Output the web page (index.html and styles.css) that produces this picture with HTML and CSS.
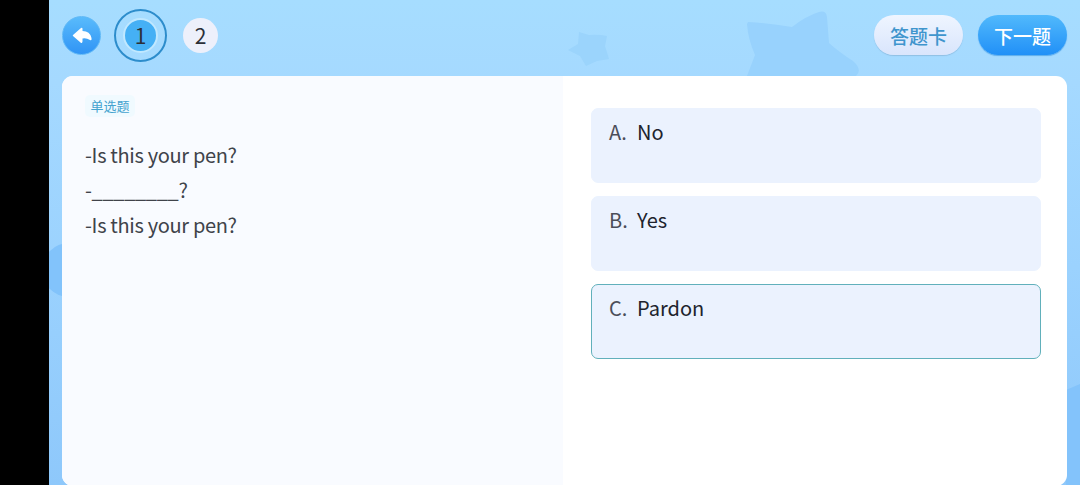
FILE: index.html
```
<!DOCTYPE html>
<html lang="zh-CN">

<head>
    <meta charset="UTF-8" />
    <meta name="viewport" content="width=device-width, initial-scale=1.0" />
    <title>单选题</title>
    <link rel="stylesheet" href="styles.css">
</head>

<body>
    <div class="page">
        <!-- 背景装饰 -->
        <svg class="decor" viewBox="0 0 1031 485" aria-hidden="true">
            <path class="star-small" d="M530 32 L540 35 Q549 34 558 36 L556 46 L560 59 L548 61 L537 66 L531 56 L519 50 L529 44 Z" />
            <path class="star-big" d="M699 22 Q720 23 743 27 Q757 16 770 12 Q777 10 778 17 L780 43 Q790 52 804 61 Q814 70 807 76 L698 76 L706 55 Q699 39 698 24 Z" />
            <circle class="bubble" cx="20" cy="270" r="27" />
            <path class="corner" d="M1017 390 L1031 384 V485 H1017 Z" />
        </svg>

        <div class="header">
            <button class="back">
                <svg width="20" height="18" viewBox="0 0 20 18">
                    <path d="M1 8 L9 1 Q10.5 0 10.5 2 V4 Q18 4 19.5 11 Q20 14 18 13 Q14 10.5 10.5 11.5 V14.5 Q10 17 8.500 15.500 L1 9 Q0.500 8.500 1 8 Z" />
                </svg>
            </button>
            <div class="num active"><span>1</span></div>
            <div class="num"><span>2</span></div>
            <div class="actions">
                <button class="btn card-btn">答题卡</button>
                <button class="btn next-btn">下一题</button>
            </div>
        </div>

        <div class="content">
            <div class="question">
                <span class="tag">单选题</span>
                <p>-Is this your pen?</p>
                <p>-________?</p>
                <p>-Is this your pen?</p>
            </div>
            <div class="options">
                <div class="option"><span class="letter">A.</span><span>No</span></div>
                <div class="option"><span class="letter">B.</span><span>Yes</span></div>
                <div class="option selected"><span class="letter">C.</span><span>Pardon</span></div>
            </div>
        </div>
    </div>
</body>

</html>
```
FILE: styles.css
```
* {
    box-sizing: border-box;
}

body {
    margin: 0;
    height: 485px;
    padding-left: 49px;
    background: #000;
    font-family: "Noto Sans CJK SC", sans-serif;
    overflow: hidden;
}

.page {
    position: relative;
    height: 485px;
    padding: 0 13px;
    background: linear-gradient(#a6ddff, #a5d9ff 17%, #9bd2fe 55%, #8ec8fb);
}

.decor {
    position: absolute;
    top: 0;
    left: 0;
    width: 1031px;
    height: 485px;
}

.star-small {
    fill: #9bd4fc;
}

.star-big {
    fill: #98d2fd;
}

.bubble {
    fill: #82c3fb;
}

.corner {
    fill: #83c3fb;
}

.header {
    position: relative;
    display: flex;
    align-items: center;
    height: 76px;
    padding-bottom: 5px;
}

.back {
    display: flex;
    justify-content: center;
    align-items: center;
    width: 39px;
    height: 39px;
    padding: 0;
    border: 1px solid #60b9f7;
    border-radius: 50%;
    background: linear-gradient(#59bbfc, #3094f5);
}

.back svg {
    fill: #fff;
}

.num {
    display: flex;
    justify-content: center;
    align-items: center;
    width: 53px;
    height: 53px;
    margin-left: 13px;
    border-radius: 50%;
}

.num span {
    width: 35px;
    height: 35px;
    border-radius: 50%;
    background: #edf0fb;
    color: #2b2f38;
    font-size: 21px;
    line-height: 34px;
    text-align: center;
}

.num.active {
    border: 2px solid #2d8dcc;
}

.num.active span {
    border: 2px solid #c0e8ff;
    background: #45b0f5;
    line-height: 30px;
}

.num + .num {
    margin-left: 7px;
}

.actions {
    display: flex;
    gap: 15px;
    margin-left: auto;
    padding-bottom: 1px;
}

.btn {
    width: 89px;
    height: 40px;
    padding: 0;
    border: none;
    border-radius: 20px;
    font-family: inherit;
    font-size: 19px;
    font-weight: 500;
    line-height: 37px;
}

.card-btn {
    background: linear-gradient(#eff5ff, #d9e5fc);
    box-shadow: 0 1px 1px #90bfe4;
    color: #3f95cd;
}

.next-btn {
    background: linear-gradient(#51b9fc, #2190f7);
    box-shadow: 0 1px 1px #5cacec;
    color: #fff;
}

.content {
    position: relative;
    display: flex;
    height: 410px;
    border-radius: 11px;
    background: #fff;
    overflow: hidden;
}

.question {
    width: 501px;
    padding: 19px 23px;
    background: #f9fbff;
    color: #40434a;
}

.tag {
    display: block;
    width: 50px;
    height: 22px;
    margin-bottom: 20px;
    border-radius: 5px;
    background: #f0faff;
    color: #45a3cf;
    font-size: 13px;
    line-height: 22px;
    text-align: center;
}

.question p {
    margin: 0;
    font-size: 20px;
    letter-spacing: -0.33px;
    line-height: 35px;
}

.options {
    display: flex;
    flex-direction: column;
    flex: 1;
    gap: 13px;
    padding: 32px 26px 0 28px;
}

.option {
    display: flex;
    height: 75px;
    padding: 8px 17px;
    border: 1px solid #ebf2fe;
    border-radius: 7px;
    background: #ebf2fe;
    color: #20232d;
    font-size: 20px;
    line-height: 30px;
}

.letter {
    width: 28px;
    color: #4b4e59;
}

.option.selected {
    border-color: #61b0bb;
}
```
